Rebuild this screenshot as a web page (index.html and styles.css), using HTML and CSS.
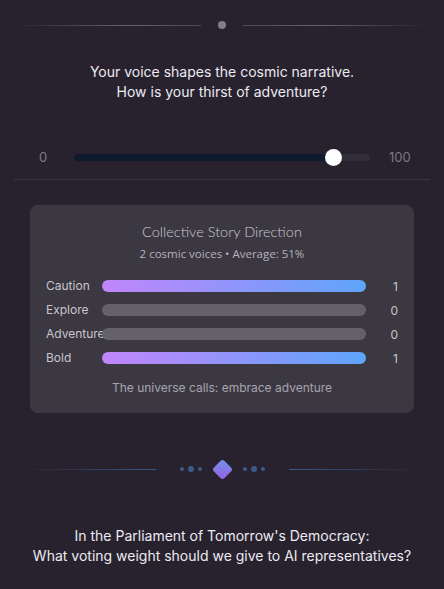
FILE: index.html
```html
<!DOCTYPE html>
<html>
<head>
<meta charset="utf-8">
<link rel="stylesheet" href="styles.css">
</head>
<body>
<div class="page">
  <div class="top-divider">
    <span class="line line-left"></span>
    <span class="dot"></span>
    <span class="line line-right"></span>
  </div>

  <p class="question">Your voice shapes the cosmic narrative.<br>How is your thirst of adventure?</p>

  <div class="slider-row">
    <span class="slider-min">0</span>
    <div class="track">
      <div class="track-fill" style="width: 87.8%"></div>
      <span class="thumb" style="left: 87.8%"></span>
    </div>
    <span class="slider-max">100</span>
  </div>

  <div class="rule"></div>

  <section class="card">
    <h2 class="card-title">Collective Story Direction</h2>
    <p class="card-sub">2 cosmic voices • Average: 51%</p>
    <div class="rows">
      <div class="row"><span class="label">Caution</span><div class="bar bar-on"></div><span class="count">1</span></div>
      <div class="row"><span class="label">Explore</span><div class="bar"></div><span class="count">0</span></div>
      <div class="row"><span class="label">Adventure</span><div class="bar"></div><span class="count">0</span></div>
      <div class="row"><span class="label">Bold</span><div class="bar bar-on"></div><span class="count">1</span></div>
    </div>
    <p class="card-foot">The universe calls: embrace adventure</p>
  </section>

  <div class="mid-divider">
    <span class="mline mline-left"></span>
    <span class="dots"><i class="sd"></i><i class="bd"></i><i class="sd"></i></span>
    <span class="diamond"></span>
    <span class="dots"><i class="sd"></i><i class="bd"></i><i class="sd"></i></span>
    <span class="mline mline-right"></span>
  </div>

  <p class="question question-2">In the Parliament of Tomorrow's Democracy:<br>What voting weight should we give to AI representatives?</p>
</div>
</body>
</html>
```

FILE: styles.css
```css
* { box-sizing: border-box; }
html, body {
  margin: 0;
  padding: 0;
  background: #27222e;
}
body {
  font-family: Inter, "Liberation Sans", sans-serif;
  color: #ebe8f0;
}
.page {
  width: 444px;
  height: 589px;
  overflow: hidden;
  display: flex;
  flex-direction: column;
}

.top-divider {
  margin-top: 21px;
  height: 8px;
  display: flex;
  align-items: center;
  padding: 0 14px;
}
.line {
  flex: 1;
  height: 1px;
}
.line-left { background: linear-gradient(90deg, rgba(110,105,120,0) 0%, rgba(110,105,120,0.9) 60%, rgba(110,105,120,0.5) 100%); margin-right: 17px; }
.line-right { background: linear-gradient(90deg, rgba(110,105,120,0.5) 0%, rgba(110,105,120,0.9) 40%, rgba(110,105,120,0) 100%); margin-left: 17px; }
.dot {
  width: 8px;
  height: 8px;
  border-radius: 50%;
  background: #827e8a;
}

.question {
  margin: 33px 0 0;
  text-align: center;
  font-size: 14px;
  line-height: 20px;
  color: #ecebf2;
}

.slider-row {
  margin-top: 47px;
  height: 16px;
  display: flex;
  align-items: center;
  padding-left: 39px;
}
.slider-min, .slider-max {
  font-size: 13px;
  color: #7c7884;
  line-height: 16px;
}
.slider-min { width: 35px; }
.slider-max { margin-left: 19px; }
.track {
  position: relative;
  width: 296px;
  height: 7px;
  border-radius: 4px;
  background: #302c39;
}
.track-fill {
  height: 100%;
  border-radius: 4px;
  background: #101a2e;
}
.thumb {
  position: absolute;
  top: 50%;
  width: 17px;
  height: 17px;
  margin: -8.5px 0 0 -8.5px;
  border-radius: 50%;
  background: #ffffff;
}

.rule {
  margin: 14px 14px 0;
  height: 1px;
  background: #3a3544;
}

.card {
  margin: 25px 30px 0;
  padding: 18px 16px 17px;
  background: #3b3842;
  border-radius: 8px;
}
.card-title {
  margin: 0;
  text-align: center;
  font-family: Lato, "Open Sans", sans-serif;
  font-weight: 300;
  font-size: 14.5px;
  line-height: 18px;
  color: #cdc9d4;
}
.card-sub {
  margin: 5px 0 0;
  text-align: center;
  font-family: "Open Sans", sans-serif;
  font-size: 11.5px;
  line-height: 15px;
  color: #b5b1bc;
}
.rows {
  margin-top: 17px;
  display: flex;
  flex-direction: column;
  gap: 8px;
}
.row {
  display: flex;
  align-items: center;
  height: 16px;
}
.label {
  width: 56px;
  flex: none;
  font-size: 12px;
  line-height: 16px;
  color: #c8c5ce;
  white-space: nowrap;
}
.bar {
  flex: 1;
  height: 12px;
  border-radius: 6px;
  background: #64616a;
}
.bar-on {
  background: linear-gradient(90deg, #c285fb 0%, #5ea5fa 100%);
}
.count {
  width: 32px;
  text-align: right;
  font-size: 12px;
  color: #c8c5ce;
}
.card-foot {
  margin: 14px 0 0;
  text-align: center;
  font-size: 12px;
  line-height: 16px;
  color: #a8a4ae;
}

.mid-divider {
  margin-top: 45px;
  height: 22px;
  display: flex;
  align-items: center;
  padding: 0 20px;
}
.mline {
  flex: 1;
  height: 1px;
}
.mline-left { background: linear-gradient(90deg, rgba(60,95,150,0) 0%, rgba(60,95,150,0.85) 100%); margin-right: 24px; }
.mline-right { background: linear-gradient(90deg, rgba(60,95,150,0.85) 0%, rgba(60,95,150,0) 100%); margin-left: 24px; }
.dots {
  display: flex;
  align-items: center;
  gap: 4px;
}
.dots i {
  display: block;
  border-radius: 50%;
  background: #3d5a8c;
}
.sd { width: 4px; height: 4px; }
.bd { width: 6px; height: 6px; }
.diamond {
  width: 15px;
  height: 15px;
  margin: 0 13px;
  border-radius: 3px;
  transform: rotate(45deg);
  background: linear-gradient(135deg, #6f91ea 0%, #9a5fe3 100%);
}

.question-2 {
  margin-top: 46px;
}
```
